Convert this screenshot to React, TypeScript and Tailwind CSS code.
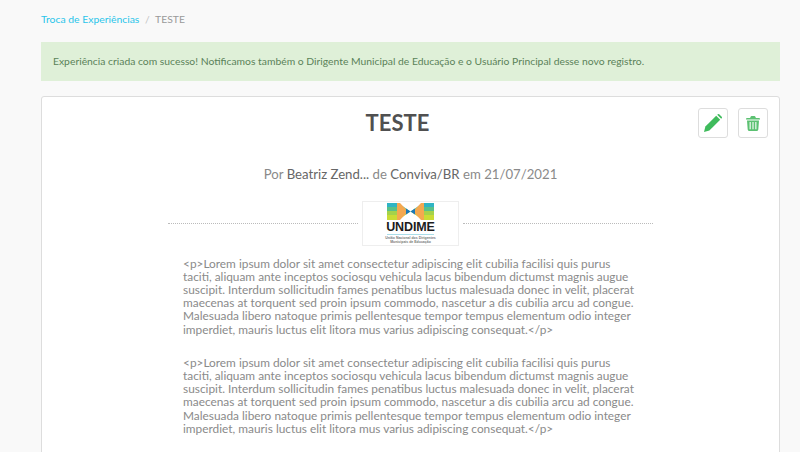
const lorem =
  "<p>Lorem ipsum dolor sit amet consectetur adipiscing elit cubilia facilisi quis purus taciti, aliquam ante inceptos sociosqu vehicula lacus bibendum dictumst magnis augue suscipit. Interdum sollicitudin fames penatibus luctus malesuada donec in velit, placerat maecenas at torquent sed proin ipsum commodo, nascetur a dis cubilia arcu ad congue. Malesuada libero natoque primis pellentesque tempor tempus elementum odio integer imperdiet, mauris luctus elit litora mus varius adipiscing consequat.</p>";

function Logo() {
  return (
    <div className="flex h-[45px] w-[97px] flex-col items-center border border-[#eeeeee] bg-white pt-[1px]">
      <svg width="47" height="17" viewBox="0 0 47 17" className="block shrink-0">
        <rect x="0" y="0" width="47" height="4" fill="#2fb4c4" />
        <rect x="0" y="4" width="47" height="4" fill="#58c08a" />
        <rect x="0" y="8" width="47" height="4" fill="#a4d24a" />
        <rect x="0" y="12" width="47" height="5" fill="#c9dc35" />
        <path d="M11 0 H36 L23.5 8.5 L36 17 H11 L23.5 8.5 Z" fill="#ffffff" />
        <path d="M10 0 L13 0 L21 8.5 L13 17 L10 17 Z" fill="#f4a850" />
        <path d="M37 0 L34 0 L26 8.5 L34 17 L37 17 Z" fill="#f4a850" />
        <path d="M19 5.5 L23.5 8.5 L19 11.5 Z M28 5.5 L23.5 8.5 L28 11.5 Z" fill="#1c78b8" />
      </svg>
      <span className="mt-[2px] text-[12.5px] leading-[11px] font-black tracking-[-0.1px] text-[#1c1c1c] [font-family:'Liberation_Sans',sans-serif]">
        UNDIME
      </span>
      <span className="mt-[1px] h-[1px] w-[47px] bg-[#a9dde8]" />
      <span className="mt-[1px] text-center text-[3.5px] leading-[4px] font-bold text-[#777777] [font-family:'Liberation_Sans',sans-serif]">
        União Nacional dos Dirigentes
        <br />
        Municipais de Educação
      </span>
    </div>
  );
}

export default function App() {
  return (
    <div className="h-[452px] w-[800px] overflow-hidden bg-[#f9f9f9] px-[41px] [font-family:Lato,sans-serif]">
      <nav className="flex h-[42px] items-center gap-[5.5px] pb-[4px] text-[10.4px] leading-[14px]">
        <a className="text-[#29c5ea]">Troca de Experiências</a>
        <span className="text-[#c4c4c4]">/</span>
        <span className="text-[#999999]">TESTE</span>
      </nav>
      <div className="flex h-[39px] w-[739px] items-center border border-[#dff0d8] bg-[#dff0d8] px-[11px] text-[10.35px] text-[#5a8259]">
        Experiência criada com sucesso! Notificamos também o Dirigente Municipal de Educação e o Usuário Principal desse novo registro.
      </div>
      <main className="mt-[15px] h-[400px] w-[739px] rounded-[3px] border border-[#dddddd] bg-white">
        <div className="relative pt-[11px] pr-[26px]">
          <h1 className="text-center text-[22px] leading-[30px] font-bold text-[#505050]">TESTE</h1>
          <div className="absolute top-[11px] right-[11px] flex gap-[10px]">
            <button className="flex h-[30px] w-[30px] items-center justify-center rounded-[3px] border border-[#dddddd] bg-white">
              <svg width="18" height="18" viewBox="0 0 18 18" fill="#3fbb5c">
                <path d="M0 18 L1.4 12.6 L12.2 1.8 L16.2 5.8 L5.4 16.6 Z" />
                <path d="M13.2 0.8 L14 0.2 Q14.6 -0.2 15.2 0.3 L17.7 2.8 Q18.2 3.4 17.8 4 L17.2 4.8 Z" />
              </svg>
            </button>
            <button className="flex h-[30px] w-[30px] items-center justify-center rounded-[3px] border border-[#dddddd] bg-white">
              <svg width="14" height="15" viewBox="0 0 14 15" fill="#5cc172">
                <path d="M4.5 1 Q4.8 0 5.6 0 H8.4 Q9.2 0 9.5 1 L9.9 2 H13 Q14 2 14 3 V3.6 H0 V3 Q0 2 1 2 H4.1 Z" />
                <path fillRule="evenodd" d="M1 4.4 H13 L12.3 13.6 Q12.2 15 11 15 H3 Q1.8 15 1.7 13.6 Z M3.6 6 V13.2 H4.7 V6 Z M6.45 6 V13.2 H7.55 V6 Z M9.3 6 V13.2 H10.4 V6 Z" />
              </svg>
            </button>
          </div>
        </div>
        <p className="mt-[27px] text-center text-[13.2px] leading-[18px] text-[#8a8a8a]">
          Por <span className="text-[#666666]">Beatriz Zend...</span> de <span className="text-[#666666]">Conviva/BR</span> em 21/07/2021
        </p>
        <div className="mt-[18px] ml-[126px] flex w-[485px] items-center gap-[4px]">
          <span className="flex-1 border-t border-dotted border-[#bbbbbb]" />
          <Logo />
          <span className="flex-1 border-t border-dotted border-[#bbbbbb]" />
        </div>
        <div className="mt-[10.5px] ml-[141px] flex w-[458px] flex-col gap-[20px] text-[11.87px] leading-[13.2px] text-[#8a8a8a]">
          <p>{lorem}</p>
          <p>{lorem}</p>
        </div>
      </main>
    </div>
  );
}
